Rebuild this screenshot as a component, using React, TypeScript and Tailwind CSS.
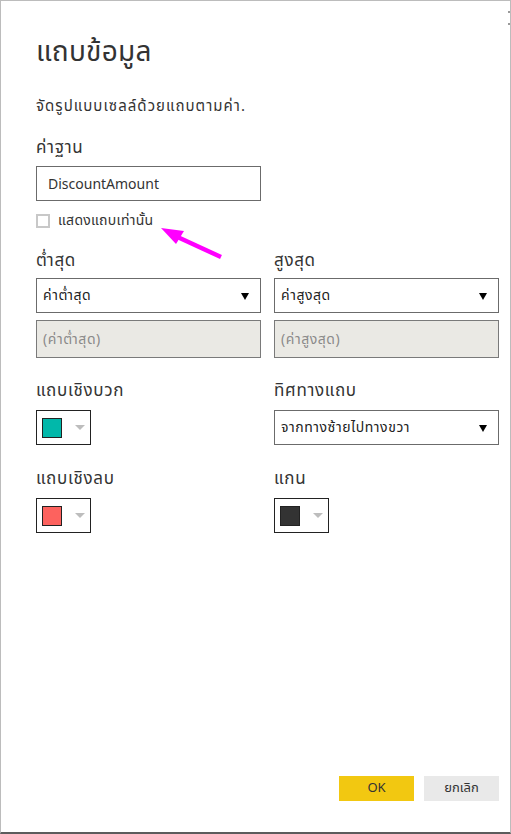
import React from "react";

const thai = { fontFamily: '"Noto Sans Thai", "Leelawadee UI", "Noto Sans", "DejaVu Sans", sans-serif' };

function Caret() {
  return (
    <svg width="8" height="8" viewBox="0 0 8 8">
      <path d="M0 1 L8 1 L4 8 Z" fill="#000" />
    </svg>
  );
}

function Select({ value }: { value: string }) {
  return (
    <div className="flex items-center justify-between h-[35px] border border-[#6b6b6b] bg-white pl-[6px] pr-[11px]">
      <span className="text-[14px] tracking-[0.04em] text-[#222]">{value}</span>
      <Caret />
    </div>
  );
}

function Disabled({ value }: { value: string }) {
  return (
    <div className="flex items-center h-[38px] border border-[#7a7a7a] bg-[#eae9e4] pl-[6px] mt-[7px]">
      <span className="text-[14px] tracking-[0.04em] text-[#8a8a8a]">{value}</span>
    </div>
  );
}

function ColorPicker({ color }: { color: string }) {
  return (
    <div className="flex items-center w-[55px] h-[35px] border border-[#222] bg-white pl-[5px]">
      <div className="w-[20px] h-[20px] border border-[#222]" style={{ background: color }} />
      <svg width="10" height="6" viewBox="0 0 10 6" className="ml-[13px]">
        <path d="M0 0 L10 0 L5 5 Z" fill="#bdbdbd" />
      </svg>
    </div>
  );
}

function Label({ children, className = "" }: { children: React.ReactNode; className?: string }) {
  return <p className={`text-[17px] leading-[24px] tracking-[0.04em] text-[#333] ${className}`}>{children}</p>;
}

export default function App() {
  return (
    <div
      className="relative w-[511px] h-[834px] bg-white border-l border-t border-r border-[#bcbcbc] border-b-2 border-b-[#5c5c5c] text-[#252423]"
      style={thai}
    >
      {/* remnants of the close button */}
      <div className="absolute right-[0px] top-[10px] w-[2px] h-[2px] bg-[#9a9a9a]" />
      <div className="absolute right-[0px] top-[22px] w-[2px] h-[2px] bg-[#9a9a9a]" />

      <div className="pl-[35px] pr-[11px] pt-[35px]">
        <h1 className="text-[28px] leading-[34px] tracking-[0.01em] font-normal text-[#333]">แถบข้อมูล</h1>
        <p className="mt-[27px] text-[15px] leading-[20px] tracking-[0.07em] text-[#333]">จัดรูปแบบเซลล์ด้วยแถบตามค่า.</p>

        <Label className="mt-[19px]">ค่าฐาน</Label>
        <div className="mt-[6px] w-[225px] h-[35px] flex items-center border border-[#6b6b6b] pl-[11px]">
          <span className="text-[14px] text-[#333]" style={{ fontFamily: '"Noto Sans", sans-serif' }}>
            DiscountAmount
          </span>
        </div>
        <label className="mt-[11px] flex items-center gap-[8px]">
          <span className="w-[14px] h-[14px] border-2 border-[#c8c8c8] bg-white" />
          <span className="text-[14px] leading-[18px] tracking-[0.02em] text-[#333]">แสดงแถบเท่านั้น</span>
        </label>

        <div className="mt-[19px] grid grid-cols-[225px_225px] gap-x-[13px]">
          <div>
            <Label className="mb-[5px]">ต่ำสุด</Label>
            <Select value="ค่าต่ำสุด" />
            <Disabled value="(ค่าต่ำสุด)" />
          </div>
          <div>
            <Label className="mb-[5px]">สูงสุด</Label>
            <Select value="ค่าสูงสุด" />
            <Disabled value="(ค่าสูงสุด)" />
          </div>

          <div className="mt-[21px]">
            <Label className="mb-[7px]">แถบเชิงบวก</Label>
            <ColorPicker color="#01b8aa" />
          </div>
          <div className="mt-[21px]">
            <Label className="mb-[7px]">ทิศทางแถบ</Label>
            <Select value="จากทางซ้ายไปทางขวา" />
          </div>

          <div className="mt-[22px]">
            <Label className="mb-[7px]">แถบเชิงลบ</Label>
            <ColorPicker color="#fd625e" />
          </div>
          <div className="mt-[22px]">
            <Label className="mb-[7px]">แกน</Label>
            <ColorPicker color="#333333" />
          </div>
        </div>
      </div>

      <div className="absolute right-[11px] bottom-[31px] flex gap-[10px]">
        <button className="w-[75px] h-[25px] bg-[#f2c811] text-[13px] text-[#333]">OK</button>
        <button className="w-[75px] h-[25px] bg-[#e9e9e9] text-[13px] text-[#333]">ยกเลิก</button>
      </div>

      {/* annotation arrow */}
      <svg className="absolute left-[150px] top-[215px]" width="80" height="50" viewBox="0 0 80 50">
        <line x1="70" y1="41" x2="20" y2="18" stroke="#ff00ff" strokeWidth="4.5" />
        <path d="M10 12 L33 15 L25 28 Z" fill="#ff00ff" />
      </svg>
    </div>
  );
}
